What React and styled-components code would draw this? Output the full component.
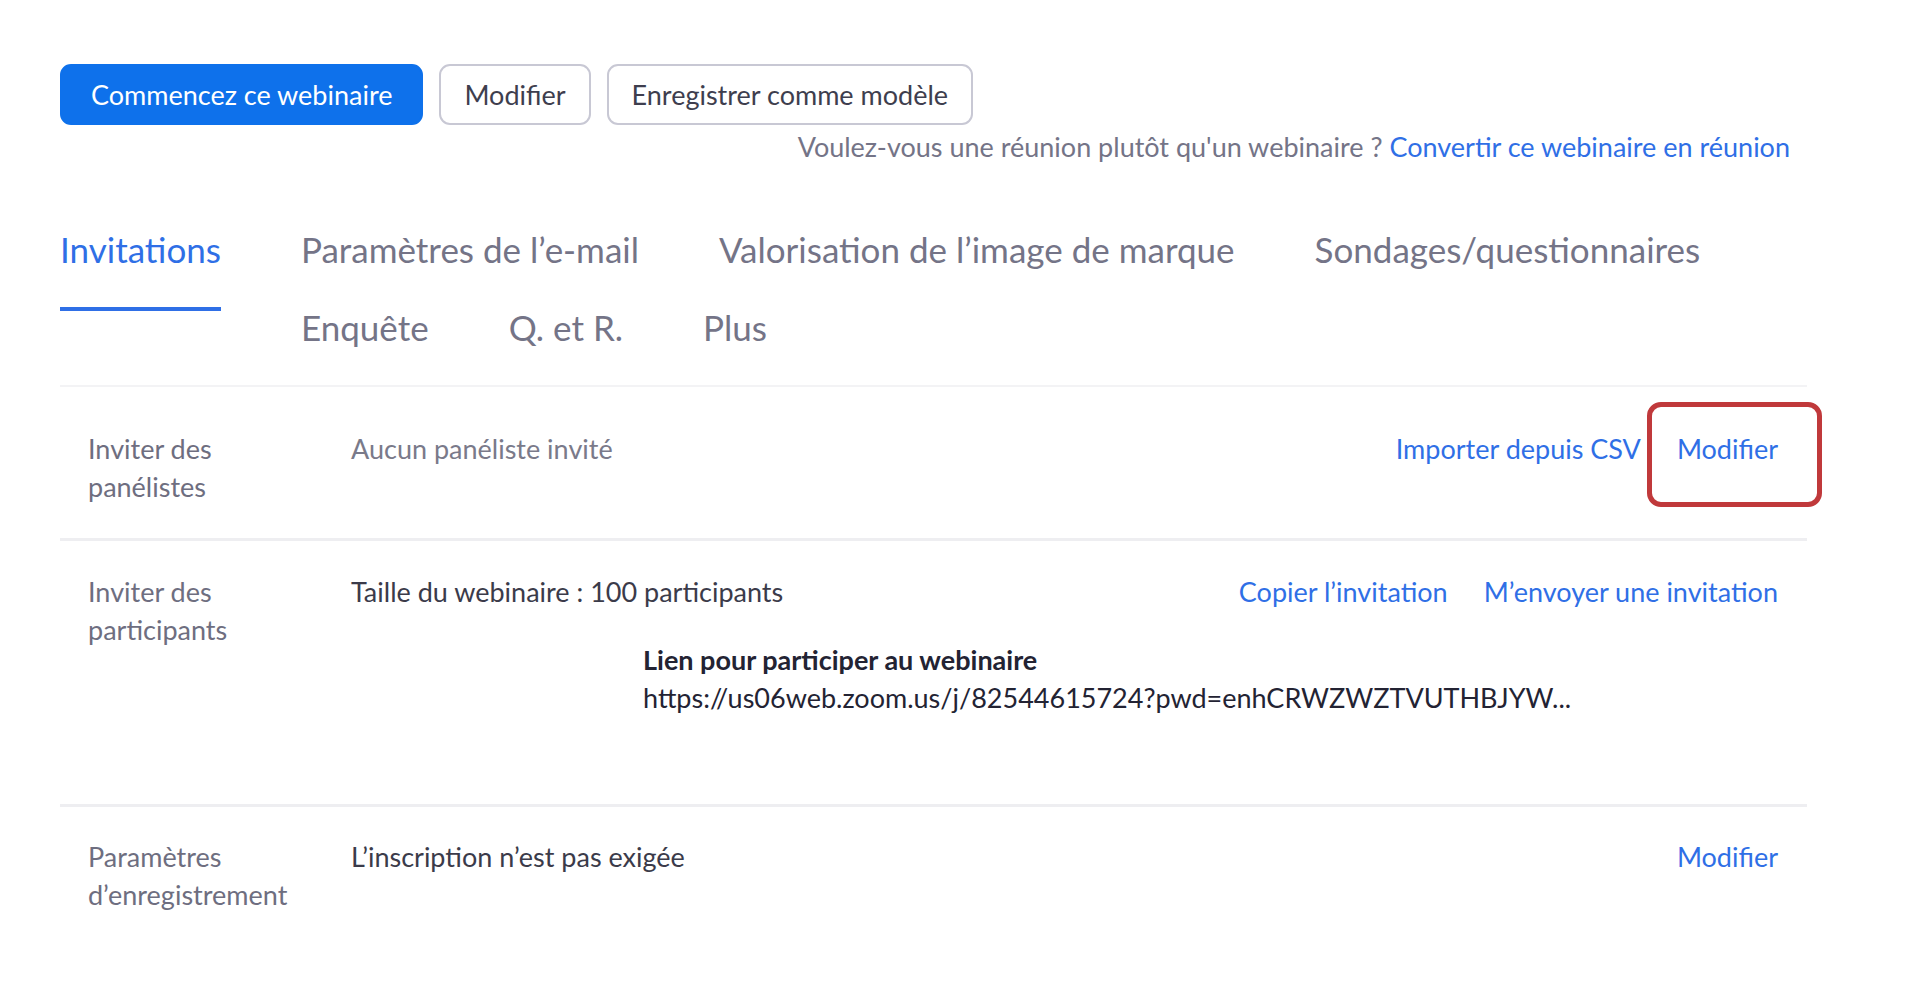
import React from 'react'
import styled, { createGlobalStyle } from 'styled-components'

const GlobalStyle = createGlobalStyle`
	body {
		margin: 0;
		background: #fff;
		font-family: Lato, "Open Sans", sans-serif;
		color: #232333;
	}
`

const Page = styled.div`
	width: 1747px;
	padding: 64px 0 0 60px;
`

const Toolbar = styled.div`
	display: flex;
	gap: 16px;
`

const Button = styled.button`
	height: 61px;
	padding: 0 ${(p) => (p.primary ? '29px' : '23px')};
	border-radius: 11px;
	font-family: inherit;
	font-size: 27px;
	border: 2px solid ${(p) => (p.primary ? '#0e71eb' : '#c8c8d4')};
	background: ${(p) => (p.primary ? '#0e71eb' : '#fff')};
	color: ${(p) => (p.primary ? '#fff' : '#3e3e4e')};
`

const ConvertLine = styled.div`
	text-align: right;
	padding-right: 17px;
	margin-top: 4px;
	font-size: 27px;
	line-height: 36px;
	color: #747487;
`

const Link = styled.a`
	position: relative;
	color: #2f6fe6;
	text-decoration: none;
	cursor: pointer;
`

const TabBar = styled.div`
	display: flex;
	gap: 80px;
	margin-top: 64px;
	padding-bottom: 38px;
	border-bottom: 2px solid #f3f3f5;
`

const Tab = styled.div`
	font-size: 35px;
	line-height: 40px;
	white-space: nowrap;
	color: ${(p) => (p.active ? '#2f6fe6' : '#747487')};
	${(p) =>
		p.active &&
		`
		align-self: flex-start;
		padding-bottom: 38px;
		border-bottom: 4px solid #2f6fe6;
	`}
`

const TabGroup = styled.div`
	display: flex;
	flex-wrap: wrap;
	flex: 1;
	column-gap: 80px;
	row-gap: 38px;
`

const Row = styled.div`
	display: flex;
	padding: ${(p) => p.pad};
	border-bottom: ${(p) => (p.last ? 'none' : '3px solid #eeeef1')};
	font-size: 27px;
	line-height: 38px;
`

const Label = styled.div`
	width: 291px;
	flex-shrink: 0;
	padding-left: 28px;
	box-sizing: border-box;
	color: #6e6e80;
`

const Value = styled.div`
	flex: 1;
	min-width: 0;
	color: ${(p) => (p.muted ? '#7a7a8a' : '#3b3b4a')};
`

const Actions = styled.div`
	display: flex;
	gap: 36px;
	padding-right: 29px;
	align-self: flex-start;
	white-space: nowrap;
`

const Highlight = styled.span`
	position: absolute;
	left: -30px;
	right: -44px;
	top: -28px;
	bottom: -39px;
	border: 5px solid #c0393b;
	border-radius: 14px;
`

const JoinBlock = styled.div`
	margin: 30px 0 0 292px;
	color: #232333;
`

const JoinTitle = styled.div`
	font-weight: 700;
`

const Url = styled.div`
	white-space: nowrap;
`

export default function App() {
	return (
		<Page>
			<GlobalStyle />
			<Toolbar>
				<Button primary>Commencez ce webinaire</Button>
				<Button>Modifier</Button>
				<Button>Enregistrer comme modèle</Button>
			</Toolbar>
			<ConvertLine>
				Voulez-vous une réunion plutôt qu'un webinaire ?{' '}
				<Link>Convertir ce webinaire en réunion</Link>
			</ConvertLine>

			<TabBar>
				<Tab active>Invitations</Tab>
				<TabGroup>
					<Tab>Paramètres de l’e-mail</Tab>
					<Tab>Valorisation de l’image de marque</Tab>
					<Tab>Sondages/questionnaires</Tab>
					<Tab>Enquête</Tab>
					<Tab>Q. et R.</Tab>
					<Tab>Plus</Tab>
				</TabGroup>
			</TabBar>

			<Row pad="43px 0 32px">
				<Label>
					Inviter des
					<br />
					panélistes
				</Label>
				<Value muted>Aucun panéliste invité</Value>
				<Actions>
					<Link>Importer depuis CSV</Link>
					<Link>
						Modifier
						<Highlight />
					</Link>
				</Actions>
			</Row>

			<Row pad="32px 0 87px">
				<Label>
					Inviter des
					<br />
					participants
				</Label>
				<Value>
					Taille du webinaire : 100 participants
					<JoinBlock>
						<JoinTitle>Lien pour participer au webinaire</JoinTitle>
						<Url>https://us06web.zoom.us/j/82544615724?pwd=enhCRWZWZTVUTHBJYW...</Url>
					</JoinBlock>
				</Value>
				<Actions>
					<Link>Copier l’invitation</Link>
					<Link>M’envoyer une invitation</Link>
				</Actions>
			</Row>

			<Row pad="31px 0 60px" last>
				<Label>
					Paramètres
					<br />
					d’enregistrement
				</Label>
				<Value>L’inscription n’est pas exigée</Value>
				<Actions>
					<Link>Modifier</Link>
				</Actions>
			</Row>
		</Page>
	)
}
